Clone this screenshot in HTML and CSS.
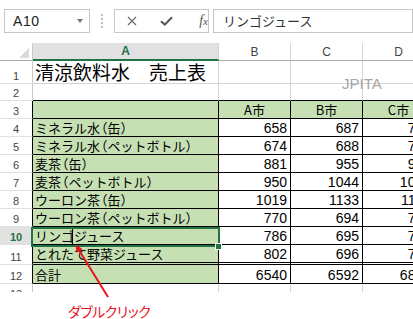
FILE: index.html
```html
<!DOCTYPE html>
<html lang="ja">
<head>
<meta charset="utf-8">
<title>清涼飲料水 売上表</title>
<link rel="stylesheet" href="styles.css">
</head>
<body>
<div class="fbar">
  <div class="namebox"><span class="nb-text">A10</span><span class="nb-arrow"></span></div>
  <div class="grip"><svg width="2" height="14" viewBox="0 0 2 14"><rect x="0" y="0" width="2" height="2" fill="#bdbdbd"/><rect x="0" y="4" width="2" height="2" fill="#bdbdbd"/><rect x="0" y="8" width="2" height="2" fill="#bdbdbd"/><rect x="0" y="12" width="2" height="2" fill="#bdbdbd"/></svg></div>
  <div class="fxbox">
    <svg class="ic-x" width="10" height="10" viewBox="0 0 10 10"><path d="M1 1L9 9M9 1L1 9" stroke="#6e6e6e" stroke-width="1.3" fill="none"/></svg>
    <svg class="ic-ok" width="13" height="10" viewBox="0 0 13 10"><path d="M1 5.2L4.8 8.6L12 1.2" stroke="#555" stroke-width="2" fill="none"/></svg>
    <span class="fx">f<span class="fx-x">x</span></span>
  </div>
  <div class="formula">リンゴジュース</div>
</div>

<div class="sheet">
  <div class="grid">
    <div class="c corner"><span class="tri"></span></div>
    <div class="c ch sel">A</div>
    <div class="c ch">B</div>
    <div class="c ch">C</div>
    <div class="c ch">D</div>

    <div class="c rh">1</div>
    <div class="c title">清涼飲料水　売上表</div>
    <div class="c"></div>
    <div class="c"></div>
    <div class="c"></div>

    <div class="c rh">2</div>
    <div class="c tt"></div>
    <div class="c tt"></div>
    <div class="c tt"></div>
    <div class="c tt"></div>

    <div class="c rh tl">3</div>
    <div class="c g tb"></div>
    <div class="c g tb ctr">A市</div>
    <div class="c g tb ctr">B市</div>
    <div class="c g tb ctr">C市</div>

    <div class="c rh tl">4</div>
    <div class="c g tb">ミネラル水<span class="pr">（</span>缶<span class="pr">）</span></div>
    <div class="c tb num">658</div>
    <div class="c tb num">687</div>
    <div class="c tb num">745</div>

    <div class="c rh tl">5</div>
    <div class="c g tb">ミネラル水<span class="pr">（</span>ペットボトル<span class="pr">）</span></div>
    <div class="c tb num">674</div>
    <div class="c tb num">688</div>
    <div class="c tb num">761</div>

    <div class="c rh tl">6</div>
    <div class="c g tb">麦茶<span class="pr">（</span>缶<span class="pr">）</span></div>
    <div class="c tb num">881</div>
    <div class="c tb num">955</div>
    <div class="c tb num">930</div>

    <div class="c rh tl">7</div>
    <div class="c g tb">麦茶<span class="pr">（</span>ペットボトル<span class="pr">）</span></div>
    <div class="c tb num">950</div>
    <div class="c tb num">1044</div>
    <div class="c tb num">1052</div>

    <div class="c rh tl">8</div>
    <div class="c g tb">ウーロン茶<span class="pr">（</span>缶<span class="pr">）</span></div>
    <div class="c tb num">1019</div>
    <div class="c tb num">1133</div>
    <div class="c tb num">1150</div>

    <div class="c rh tl">9</div>
    <div class="c g tb">ウーロン茶<span class="pr">（</span>ペットボトル<span class="pr">）</span></div>
    <div class="c tb num">770</div>
    <div class="c tb num">694</div>
    <div class="c tb num">742</div>

    <div class="c rh tl rsel">10</div>
    <div class="c g tb">リンゴジュース</div>
    <div class="c tb num">786</div>
    <div class="c tb num">695</div>
    <div class="c tb num">745</div>

    <div class="c rh tl">11</div>
    <div class="c g tb dbl">とれたて野菜ジュース</div>
    <div class="c tb num dbl">802</div>
    <div class="c tb num dbl">696</div>
    <div class="c tb num dbl">760</div>

    <div class="c rh tl">12</div>
    <div class="c g tb">合計</div>
    <div class="c tb num">6540</div>
    <div class="c tb num">6592</div>
    <div class="c tb num">6885</div>

    <div class="c rh">13</div>
    <div class="c"></div>
    <div class="c"></div>
    <div class="c"></div>
    <div class="c"></div>
  </div>
  <div class="watermark">JPITA</div>
  <div class="selection"></div>
  <div class="handle"></div>
  <div class="caret"></div>
</div>

<div class="note">ダブルクリック</div>

<svg class="arrow" width="413" height="319" viewBox="0 0 413 319">
  <line x1="108" y1="297" x2="79.5" y2="251" stroke="#e8141c" stroke-width="2"/>
  <polygon points="75.5,244.5 82.5,249 76.5,252.8" fill="#e8141c"/>
</svg>
</body>
</html>
```

FILE: styles.css
```css
* {
  box-sizing: border-box;
  margin: 0;
  padding: 0;
}

html, body {
  width: 413px;
  height: 319px;
  overflow: hidden;
  background: #fff;
}

body {
  position: relative;
  font-family: "Noto Sans CJK JP", "Liberation Sans", sans-serif;
  color: #000;
}

/* ---------- formula bar ---------- */
.fbar {
  display: flex;
  align-items: flex-start;
  height: 43px;
  padding: 9px 0 0 4px;
}

.namebox {
  width: 102px;
  height: 24px;
  border: 1px solid #c6c6c6;
  display: flex;
  align-items: center;
  justify-content: space-between;
  padding: 0 6px 0 8px;
}

.nb-text {
  font: 14px "Liberation Sans", sans-serif;
  color: #222;
  letter-spacing: 0.6px;
}

.nb-arrow {
  width: 0;
  height: 0;
  border-left: 3.5px solid transparent;
  border-right: 3.5px solid transparent;
  border-top: 4px solid #777;
}

.grip {
  width: 30px;
  height: 24px;
  display: flex;
  align-items: center;
  justify-content: center;
}

.fxbox {
  width: 110px;
  height: 24px;
  border: 1px solid #c6c6c6;
  display: flex;
  align-items: center;
  padding-left: 12px;
}

.ic-ok {
  margin-left: 23px;
}

.fx {
  margin-left: 26px;
  font: italic 14px "Liberation Serif", serif;
  color: #555;
  line-height: 14px;
}

.fx-x {
  font-size: 11px;
}

.formula {
  margin-left: 4px;
  width: 200px;
  flex: none;
  height: 24px;
  border: 1px solid #c6c6c6;
  padding-left: 9px;
  font-size: 13px;
  line-height: 21px;
  color: #333;
  white-space: nowrap;
}

/* ---------- sheet ---------- */
.sheet {
  position: relative;
  height: 249px;
  overflow: hidden;
}

.grid {
  display: grid;
  grid-template-columns: 33px 186px 72px 72px 72px;
  grid-template-rows: 18px 23px 17px repeat(8, 18px) 20px 19px 18px;
  width: 435px;
}

.c {
  border-right: 1px solid #d4d4d4;
  border-bottom: 1px solid #d4d4d4;
  display: flex;
  align-items: flex-end;
  padding: 0 2px;
  font-size: 13px;
  line-height: 16px;
  white-space: nowrap;
  min-width: 0;
}

.pr {
  font-feature-settings: "palt";
  padding: 0 0.5px;
}

.corner {
  position: relative;
  border-right-color: #c8c8c8;
  border-bottom-color: #ababab;
}

.tri {
  position: absolute;
  right: 3px;
  bottom: 2px;
  width: 0;
  height: 0;
  border-left: 10px solid transparent;
  border-bottom: 10px solid #dadada;
}

.ch {
  justify-content: center;
  align-items: center;
  font: 12px "Liberation Sans", sans-serif;
  color: #444;
  border-bottom-color: #ababab;
  line-height: 14px;
}

.ch.sel {
  background: #e1e1e1;
  color: #217346;
  font-weight: bold;
  border-bottom: 2px solid #217346;
}

.rh {
  justify-content: center;
  font: 11px "Liberation Sans", sans-serif;
  line-height: 14px;
  color: #444;
  border-right-color: #c8c8c8;
  border-bottom-color: #e1e1e1;
}

.rh.tl {
  border-right-color: #000;
}

.rh.rsel {
  background: #e1e1e1;
  color: #217346;
  font-weight: bold;
}

.title {
  font-size: 19px;
  line-height: 22px;
  padding-left: 2px;
  overflow: visible;
}

.tt {
  border-bottom-color: #000;
}

.tb {
  border-right-color: #000;
  border-bottom-color: #000;
}

.g {
  background: #c6e0b4;
}

.ctr {
  justify-content: center;
}

.num {
  justify-content: flex-end;
  font-family: "Liberation Sans", sans-serif;
  font-size: 14px;
  padding-right: 3px;
}

.dbl {
  border-bottom: 3px double #000;
}

.watermark {
  position: absolute;
  left: 342px;
  top: 32px;
  font: 15px "Liberation Sans", sans-serif;
  line-height: 17px;
  color: #a6a6a6;
}

.selection {
  position: absolute;
  left: 31px;
  top: 184px;
  width: 189px;
  height: 20px;
  border: 2px solid #217346;
}

.handle {
  position: absolute;
  left: 215px;
  top: 200px;
  width: 7px;
  height: 7px;
  background: #217346;
  border: 1px solid #fff;
}

.caret {
  position: absolute;
  left: 72px;
  top: 186px;
  width: 1px;
  height: 15px;
  background: #000;
}

/* ---------- annotation ---------- */
.note {
  margin-top: 10px;
  padding-left: 68px;
  font-size: 14px;
  line-height: 18px;
  color: #e8141c;
  font-feature-settings: "palt";
  letter-spacing: -0.5px;
}

.arrow {
  position: absolute;
  left: 0;
  top: 0;
  pointer-events: none;
}
```
